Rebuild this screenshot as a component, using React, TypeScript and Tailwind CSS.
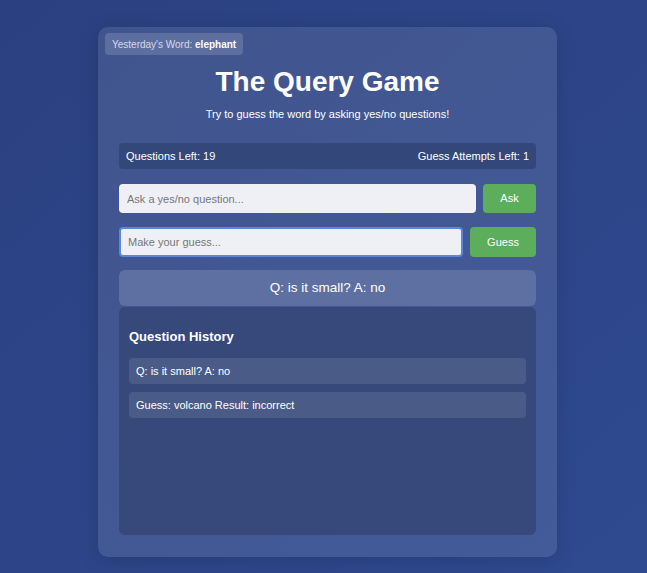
import { useState } from 'react';

// Jeu de questions oui/non
export default function App() {
  const [question, setQuestion] = useState('');
  const [guess, setGuess] = useState('');

  const history = ['Q: is it small? A: no', 'Guess: volcano Result: incorrect'];

  return (
    <div
      className="min-h-screen w-full bg-gradient-to-br from-[#2b4080] to-[#2f4a90] flex justify-center pt-[27px] pl-[8px] text-white"
      style={{ fontFamily: '"Liberation Sans", Arial, sans-serif' }}
    >
      <div className="relative w-[459px] h-[530px] rounded-[10px] bg-white/10 shadow-[0_4px_20px_rgba(0,0,0,0.15)] px-[21px] pt-[38px] pb-[22px] flex flex-col">
        {/* Badge */}
        <div className="absolute top-[6px] left-[7px] h-[22px] flex items-center rounded-[4px] bg-white/15 px-[7px] text-[10px]">
          <span className="text-white/75">Yesterday's Word:&nbsp;</span>
          <span className="font-bold text-white">elephant</span>
        </div>

        <h1 className="text-center text-[28px] leading-[34px] font-bold">The Query Game</h1>
        <p className="mt-[8px] text-center text-[11px] leading-[15px]">
          Try to guess the word by asking yes/no questions!
        </p>

        {/* Compteurs */}
        <div className="mt-[21px] flex items-center justify-between rounded-[4px] bg-[#34477a] px-[7px] h-[26px] text-[11px]">
          <span>Questions Left: 19</span>
          <span>Guess Attempts Left: 1</span>
        </div>

        <div className="mt-[15px] flex gap-[7px]">
          <input
            value={question}
            onChange={e => setQuestion(e.target.value)}
            placeholder="Ask a yes/no question..."
            className="flex-1 h-[29px] rounded-[4px] bg-[#eff0f6] px-[8px] text-[11px] text-gray-900 placeholder:text-[#767676] outline-none"
          />
          <button className="w-[53px] h-[29px] rounded-[4px] bg-[#5cad5c] text-[11px] text-white">Ask</button>
        </div>

        <div className="mt-[14px] flex gap-[7px]">
          <input
            value={guess}
            onChange={e => setGuess(e.target.value)}
            placeholder="Make your guess..."
            className="flex-1 h-[30px] rounded-[4px] bg-[#eff0f6] px-[7px] text-[11px] text-gray-900 placeholder:text-[#767676] outline-none border-2 border-[#5b86e0]"
          />
          <button className="w-[66px] h-[30px] rounded-[4px] bg-[#5cad5c] text-[11px] text-white">Guess</button>
        </div>

        {/* Dernière réponse */}
        <div className="mt-[13px] h-[36px] rounded-[6px] bg-[#5e70a1] flex items-center justify-center text-[13.5px]">
          Q: is it small? A: no
        </div>

        {/* Historique */}
        <div className="mt-[1px] flex-1 rounded-[6px] bg-[#36497a] px-[10px] pt-[22px]">
          <h2 className="text-[13px] leading-[16px] font-bold">Question History</h2>
          <div className="mt-[13px] flex flex-col gap-[8px]">
            {history.map(item => (
              <div key={item} className="h-[26px] rounded-[4px] bg-[#4a5b87] px-[7px] flex items-center text-[11px]">
                {item}
              </div>
            ))}
          </div>
        </div>
      </div>
    </div>
  );
}
